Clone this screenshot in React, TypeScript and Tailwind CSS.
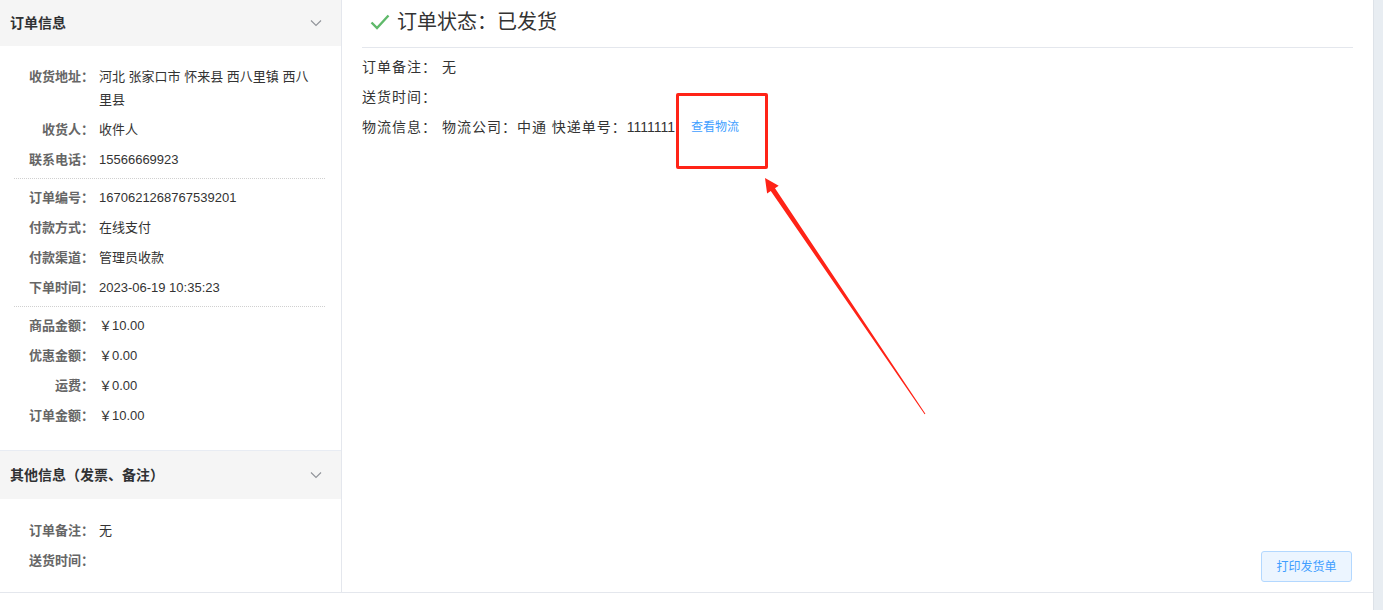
import React from "react";

const font = { fontFamily: '"Liberation Sans", "Noto Sans CJK SC", sans-serif' };

function Chevron() {
  return (
    <svg width="12" height="8" viewBox="0 0 12 8" className="text-[#909399]">
      <polyline points="1,1.5 6,6.5 11,1.5" fill="none" stroke="currentColor" strokeWidth="1.1" />
    </svg>
  );
}

function Row({ label, children }: { label: string; children?: React.ReactNode }) {
  return (
    <div className="flex mb-[7px] text-[13px] leading-[23px]">
      <div className="w-[80px] text-right shrink-0 font-bold text-[#666]">{label}</div>
      <div className="ml-[5px] w-[215px] text-[#333]">{children}</div>
    </div>
  );
}

function Divider() {
  return <div className="mt-[3px] mb-[7px] border-t border-dotted border-[#d0d0d0] mr-[16px]" />;
}

export default function App() {
  return (
    <div className="relative w-[1383px] h-[610px] flex bg-white overflow-hidden" style={font}>
      <div className="flex-1 flex flex-col">
        <div className="h-[593px] flex border-b border-[#e4e7ed]">
          {/* Left panel */}
          <div className="w-[342px] shrink-0 border-r border-[#e4e7ed] flex flex-col">
            <div className="h-[46px] bg-[#f5f5f5] flex items-center justify-between pl-[10px] pr-[19px]">
              <span className="text-[14px] font-bold text-[#303133]">订单信息</span>
              <Chevron />
            </div>
            <div className="pt-[19px] pb-[16px] pl-[14px]">
              <Row label="收货地址：">河北 张家口市 怀来县 西八里镇 西八里县</Row>
              <Row label="收货人：">收件人</Row>
              <Row label="联系电话：">15566669923</Row>
              <Divider />
              <Row label="订单编号：">1670621268767539201</Row>
              <Row label="付款方式：">在线支付</Row>
              <Row label="付款渠道：">管理员收款</Row>
              <Row label="下单时间：">2023-06-19 10:35:23</Row>
              <Divider />
              <Row label="商品金额：">￥10.00</Row>
              <Row label="优惠金额：">￥0.00</Row>
              <Row label="运费：">￥0.00</Row>
              <Row label="订单金额：">￥10.00</Row>
            </div>
            <div className="h-[49px] bg-[#f5f5f5] border-t border-[#e8ecf3] flex items-center justify-between pl-[10px] pr-[19px]">
              <span className="text-[14px] font-bold text-[#303133]">其他信息（发票、备注）</span>
              <Chevron />
            </div>
            <div className="pt-[20px] pl-[14px]">
              <Row label="订单备注：">无</Row>
              <Row label="送货时间：" />
            </div>
          </div>
          {/* Right panel */}
          <div className="flex-1 flex flex-col px-[20px]">
            <div className="h-[48px] flex items-center border-b border-[#e4e7ed] pl-[8px]">
              <svg width="20" height="16" viewBox="0 0 20 16" className="mr-[7px] mb-[4px]">
                <polyline points="1.5,8.5 7,14 18.5,1.5" fill="none" stroke="#5fb96a" strokeWidth="2.4" />
              </svg>
              <span className="text-[20px] text-[#333] mb-[3px]">订单状态：已发货</span>
            </div>
            <div className="pt-[4px] text-[14px] text-[#333] leading-[30px] tracking-[1px]">
              <div>订单备注：&nbsp;无</div>
              <div>送货时间：</div>
              <div className="flex items-center">
                <span>
                  物流信息：&nbsp;物流公司：中通 快递单号：
                  <span className="tracking-normal">1111111</span>
                </span>
                <span className="ml-[16px] text-[12px] text-[#409eff] tracking-normal">查看物流</span>
              </div>
            </div>
            <div className="flex-1" />
            <div className="flex justify-end pb-[10px] pr-[1px]">
              <button className="w-[91px] h-[31px] rounded-[3px] border border-[#b3d8ff] bg-[#ecf5ff] text-[#409eff] text-[12px]">
                打印发货单
              </button>
            </div>
          </div>
        </div>
      </div>
      <div className="w-[10px] shrink-0 bg-[#e8edf2] border-l border-[#dde2e8]" />

      {/* annotation overlay */}
      <div className="absolute left-[676px] top-[93px] w-[92px] h-[76px] border-[3px] border-[#ff2317] rounded-[2px] pointer-events-none" />
      <svg className="absolute left-0 top-0 pointer-events-none" width="1383" height="610">
        <polygon
          points="765,178 778.7,185.7 775,188.2 925.4,413.8 924.6,414.2 770.8,191 767.1,193.5"
          fill="#ff2317"
        />
      </svg>
    </div>
  );
}
